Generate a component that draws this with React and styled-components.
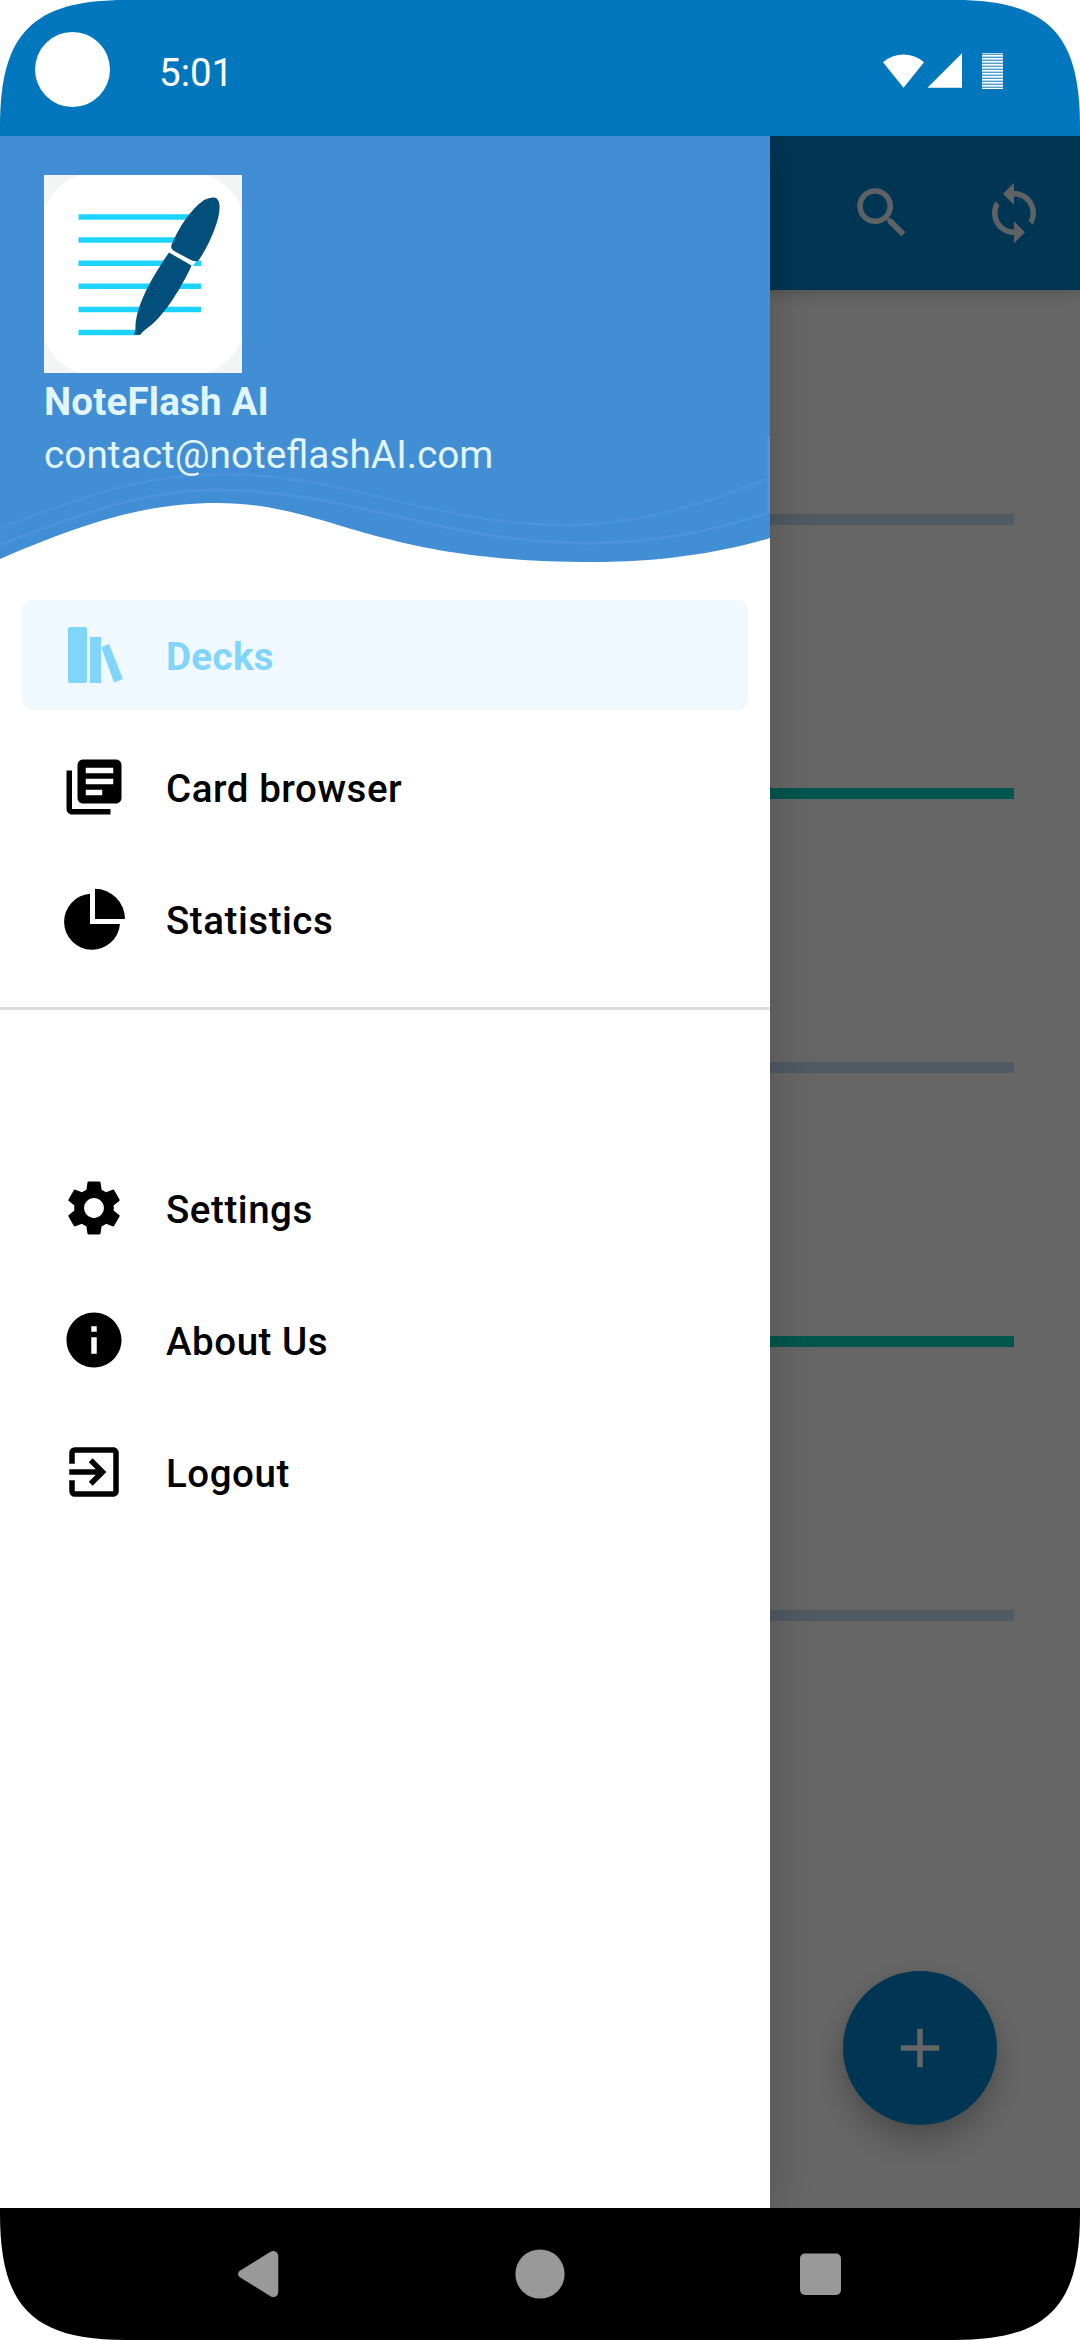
import React from "react";
import styled, { createGlobalStyle } from "styled-components";
import { MdAdd, MdExitToApp, MdInfo, MdLibraryBooks, MdSearch, MdSettings, MdSync } from "react-icons/md";

const GlobalStyle = createGlobalStyle`
  * { box-sizing: border-box; }
  html, body { margin: 0; background: #fff; }
  body { font-family: Roboto, "Liberation Sans", sans-serif; }
  svg { display: block; flex: none; }
`;

const Phone = styled.div`
  width: 1080px;
  height: 2340px;
  display: flex;
  flex-direction: column;
  overflow: hidden;
  background: #fff;
  clip-path: path("M0 126 C0 33 33 0 126 0 H954 C1047 0 1080 33 1080 126 V2214 C1080 2307 1047 2340 954 2340 H126 C33 2340 0 2307 0 2214 Z");
`;

const StatusBar = styled.header`
  height: 136px;
  flex: none;
  display: flex;
  align-items: flex-start;
  background: #0277bd;
  color: #fff;
  padding: 32px 77px 0 35px;
`;

const Camera = styled.div`
  width: 75px;
  height: 75px;
  border-radius: 50%;
  background: #fff;
`;

const Clock = styled.time`
  margin: 18px auto 0 49px;
  font-size: 38.5px;
  line-height: 45px;
`;

const StatusIcons = styled.div`
  display: flex;
  margin-top: 21px;
`;

const Battery = styled.div`
  width: 21px;
  height: 36px;
  margin-left: 19px;
  background: repeating-linear-gradient(#b3d6ec 0 1px, #4f9fd1 1px 2px, #fff 2px 3px);
`;

const Body = styled.div`
  position: relative;
  height: 2072px;
  flex: none;
  overflow: hidden;
`;

const Page = styled.main`
  height: 100%;
  display: flex;
  flex-direction: column;
  background: #fff;
`;

const Toolbar = styled.div`
  height: 154px;
  flex: none;
  display: flex;
  justify-content: flex-end;
  align-items: center;
  gap: 66px;
  padding-right: 33px;
  background: #0288d1;
  color: #ecf6fb;
  box-shadow: 0 3px 14px rgba(0, 0, 0, 0.2);
`;

const DeckList = styled.div`
  display: flex;
  flex-direction: column;
  gap: 263px;
  padding: 224px 66px 0;
`;

const DeckBar = styled.div`
  height: 11px;
  background: ${(p) => (p.$done ? "#00d7c0" : "#c8e1f7")};
`;

const Fab = styled.button`
  width: 154px;
  height: 154px;
  margin: auto 83px 83px auto;
  padding: 0;
  border: 0;
  border-radius: 50%;
  display: grid;
  place-items: center;
  background: #0288d1;
  color: #fff;
  box-shadow: 0 16px 32px rgba(0, 0, 0, 0.25), 0 0 12px rgba(0, 0, 0, 0.05);
`;

const Scrim = styled.div`
  position: absolute;
  inset: 0;
  background: rgba(0, 0, 0, 0.6);
`;

const Drawer = styled.aside`
  position: absolute;
  inset: 0 auto 0 0;
  width: 770px;
  background: #fff;
  box-shadow: 0 0 44px rgba(0, 0, 0, 0.2);
`;

const DrawerHeader = styled.div`
  position: relative;
  height: 464px;
  padding: 39px 44px 0;
  color: #e1f5fe;
`;

const Wave = styled.svg`
  position: absolute;
  inset: 0;
`;

const Account = styled.div`
  position: relative;
  display: flex;
  flex-direction: column;
  align-items: flex-start;
  font-size: 38.5px;
  line-height: 45px;
`;

const AccountName = styled.div`
  margin-top: 6px;
  font-weight: 700;
  letter-spacing: 0.2px;
  white-space: nowrap;
`;

/* Spacing comes from the font size here, so that the "fl" ligature is kept. */
const AccountMail = styled.div`
  margin-top: 8px;
  font-size: 38.8px;
  white-space: nowrap;
`;

const Menu = styled.nav`
  display: flex;
  flex-direction: column;
  gap: 22px;
  padding: ${(p) => (p.$second ? "143px" : "0")} 22px ${(p) => (p.$second ? "0" : "33px")};
`;

const MenuItem = styled.div`
  height: 110px;
  display: flex;
  align-items: center;
  gap: 39px;
  padding: 0 39px;
  border-radius: 11px;
  font-size: 38.5px;
  line-height: 45px;
  font-weight: ${(p) => (p.$active ? 700 : 500)};
  letter-spacing: ${(p) => (p.$active ? "0.35px" : "0.55px")};
  color: ${(p) => (p.$active ? "#81d4fa" : "#000")};
  background: ${(p) => (p.$active ? "#f0f9ff" : "transparent")};
`;

const MenuLabel = styled.span`
  padding-top: 2px;
`;

const Divider = styled.div`
  height: 3px;
  background: #dedede;
`;

const NavBar = styled.footer`
  height: 132px;
  flex: none;
  display: flex;
  justify-content: center;
  align-items: center;
  gap: 214px;
  background: #000;
  color: #999;
`;

const WifiIcon = () => (
  <svg width="41" height="35" viewBox="0 0 41 35" fill="currentColor">
    <path d="M0 9.3A31 31 0 0 1 41 9.3L20.5 34.7Z" />
  </svg>
);

const SignalIcon = () => (
  <svg width="39" height="35" viewBox="0 0 39 35" fill="currentColor">
    <path d="M3.5 34.7L38 0.3V34.7Z" />
  </svg>
);

const Logo = () => (
  <svg width="198" height="198" viewBox="0 0 198 198">
    <path fill="#f3f4f4" d="M0 0H198V198H0Z" />
    <path fill="#fff" d="M34 0H164Q188 10 198 34V164Q188 188 164 198H34Q10 188 0 164V34Q10 10 34 0Z" />
    <g stroke="#1dd3ff" strokeWidth="5.5">
      <path d="M34.5 42H148M34.5 65H140M34.5 88.3H157M34.5 111.3H157M34.5 134.5H157M34.5 157.5H94" />
    </g>
    <path fill="#fff" d="M124 76L128 70L154 84L148 92Z" />
    <path
      fill="#024f7b"
      d="M170 22.5C174 23 176 27 175.5 34C175 47 164 73 154 86Q150 87 145 84L130 76Q126 73 127.500 70C135 52 146 35 160 25Q166 22 170 22.500Z"
    />
    <path fill="#024f7b" d="M125 77.500L147.500 90.500C140 108 121 140 106 151Q99 156 96 160L90 159.500L91.500 154C91 133 106 105 125 77.500Z" />
  </svg>
);

const HeaderWave = () => (
  <Wave width="770" height="430" viewBox="0 136 770 430" fill="none">
    <path
      fill="#418ed5"
      d="M0 136H770V538C720 553 660 562 593 562C370 562 330 503 217 503C150 503 90 520 0 559Z"
    />
    <g stroke="#5798e0" strokeWidth="3">
      <path opacity=".4" d="M0 528C60 506 130 475 220 474C350 474 430 525 567 525C640 525 710 502 770 478" />
      <path opacity=".5" d="M0 545C70 518 140 490 217 490C350 490 440 543 590 543C660 543 720 529 770 512" />
      <path opacity=".8" d="M769 436V512" />
    </g>
  </Wave>
);

const DecksIcon = () => (
  <svg width="66" height="66" viewBox="0 0 66 66" fill="currentColor">
    <rect x="7" y="5" width="19" height="56" rx="2" />
    <rect x="29" y="15" width="11" height="46" />
    <path d="M40.300 25.300L48 22L62 57L53 60.500Z" />
  </svg>
);

const PieIcon = () => (
  <svg width="66" height="66" viewBox="0 0 66 66" fill="currentColor">
    <path d="M29 7.800A28 28 0 1 0 59 38H29Z" />
    <path d="M34 2.800A30.200 30.200 0 0 1 64 33H34Z" />
  </svg>
);

const BackIcon = () => (
  <svg width="66" height="66" viewBox="0 0 66 66" fill="currentColor">
    <path d="M12.500 30Q9.500 33 12.500 36L43.500 55.200Q47 57.200 50 54.500Q51.300 53 51.300 50V16Q51.300 13 50 11.500Q47 8.800 43.500 10.800Z" />
  </svg>
);

const HomeIcon = () => (
  <svg width="66" height="66" viewBox="0 0 66 66" fill="currentColor">
    <circle cx="33" cy="33" r="24.600" />
  </svg>
);

const RecentsIcon = () => (
  <svg width="66" height="66" viewBox="0 0 66 66" fill="currentColor">
    <rect x="13" y="12.500" width="41" height="41.500" rx="5" />
  </svg>
);

const mainItems = [
  { label: "Decks", Icon: DecksIcon, active: true },
  { label: "Card browser", Icon: MdLibraryBooks },
  { label: "Statistics", Icon: PieIcon },
];

const moreItems = [
  { label: "Settings", Icon: MdSettings },
  { label: "About Us", Icon: MdInfo },
  { label: "Logout", Icon: MdExitToApp },
];

const MenuGroup = ({ items, second }) => (
  <Menu $second={second}>
    {items.map(({ label, Icon, active }) => (
      <MenuItem key={label} $active={active}>
        <Icon size={66} />
        <MenuLabel>{label}</MenuLabel>
      </MenuItem>
    ))}
  </Menu>
);

export default function App() {
  return (
    <>
      <GlobalStyle />
      <Phone>
        <StatusBar>
          <Camera />
          <Clock>5:01</Clock>
          <StatusIcons>
            <WifiIcon />
            <SignalIcon />
            <Battery />
          </StatusIcons>
        </StatusBar>
        <Body>
          <Page>
            <Toolbar>
              <MdSearch size={66} />
              <MdSync size={66} />
            </Toolbar>
            <DeckList>
              {[false, true, false, true, false].map((done, i) => (
                <DeckBar key={i} $done={done} />
              ))}
            </DeckList>
            <Fab aria-label="Add">
              <MdAdd size={66} />
            </Fab>
          </Page>
          <Scrim />
          <Drawer>
            <DrawerHeader>
              <HeaderWave />
              <Account>
                <Logo />
                <AccountName>NoteFlash AI</AccountName>
                <AccountMail>contact@noteflashAI.com</AccountMail>
              </Account>
            </DrawerHeader>
            <MenuGroup items={mainItems} />
            <Divider />
            <MenuGroup items={moreItems} second />
          </Drawer>
        </Body>
        <NavBar>
          <BackIcon />
          <HomeIcon />
          <RecentsIcon />
        </NavBar>
      </Phone>
    </>
  );
}
